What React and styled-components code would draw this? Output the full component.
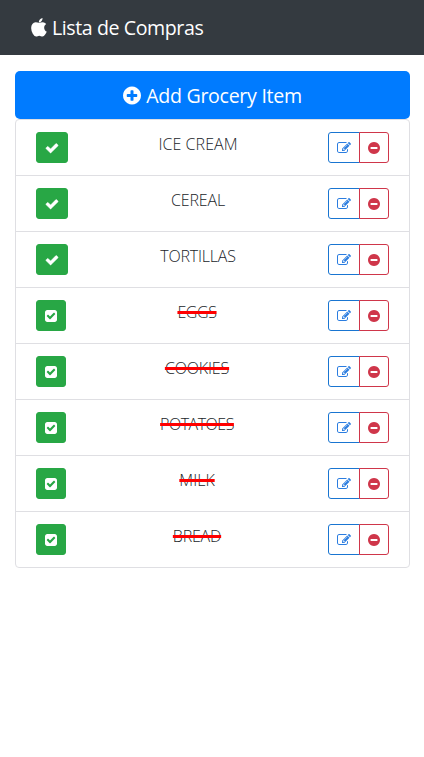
import React from "react";
import styled, { createGlobalStyle } from "styled-components";

const GlobalStyle = createGlobalStyle`
  *, *::before, *::after { box-sizing: border-box; }
  body {
    margin: 0;
    background: #fff;
    color: #212529;
    font-family: "Open Sans", "Noto Sans", sans-serif;
    font-size: 16px;
    line-height: 24px;
  }
`;

const disc =
  "m320-64q0 209-103 385.5t-279.5 279.5-385.5 103-385.5-103-279.5-279.5-103-385.5 103-385.5 279.5-279.5 385.5-103 385.5 103 279.5 279.5 103 385.5z";

const icons = {
  check: {
    box: "0 0 1792 1792",
    d: "M1671 566q0 40-28 68l-724 724-136 136q-28 28-68 28t-68-28l-136-136-362-362q-28-28-28-68t28-68l136-136q28-28 68-28t68 28l294 295 656-657q28-28 68-28t68 28l136 136q28 28 28 68z",
  },
  checkSquare: {
    box: "128 0 1536 1792",
    d: "M813 1299l614-614q19-19 19-45t-19-45l-102-102q-19-19-45-19t-45 19l-467 467-211-211q-19-19-45-19t-45 19l-102 102q-19 19-19 45t19 45l358 358q19 19 45 19t45-19zm851-883v960q0 119-84.5 203.5t-203.5 84.5h-960q-119 0-203.5-84.5t-84.5-203.5v-960q0-119 84.5-203.5t203.5-84.5h960q119 0 203.5 84.5t84.5 203.5z",
  },
  edit: {
    box: "0 0 1792 1792",
    d: "M888 1184l116-116-152-152-116 116v56h96v96h56zm440-720q-16-16-33 1l-350 350q-17 17-1 33t33-1l350-350q17-17 1-33zm80 594v190q0 119-84.5 203.5t-203.5 84.5h-832q-119 0-203.5-84.5t-84.5-203.5v-832q0-119 84.5-203.5t203.5-84.5h832q63 0 117 25 15 7 18 23 3 17-9 29l-49 49q-14 14-32 8-23-6-45-6h-832q-66 0-113 47t-47 113v832q0 66 47 113t113 47h832q66 0 113-47t47-113v-126q0-13 9-22l64-64q15-15 35-7t20 29zm-96-738l288 288-672 672h-288v-288zm444 132l-92 92-288-288 92-92q28-28 68-28t68 28l152 152q28 28 28 68t-28 68z",
  },
  plus: {
    box: "128 0 1536 1792",
    d: "M1344 960v-128q0-26-19-45t-45-19h-256v-256q0-26-19-45t-45-19h-128q-26 0-45 19t-19 45v256h-256q-26 0-45 19t-19 45v128q0 26 19 45t45 19h256v256q0 26 19 45t45 19h128q26 0 45-19t19-45v-256h256q26 0 45-19t19-45z" + disc,
  },
  minus: {
    box: "128 0 1536 1792",
    d: "M1344 960v-128q0-26-19-45t-45-19h-768q-26 0-45 19t-19 45v128q0 26 19 45t45 19h768q26 0 45-19t19-45z" + disc,
  },
  apple: {
    box: "195 0 1400 1792",
    d: "M1585 1215q-39 125-123 250-129 196-257 196-49 0-140-32-86-32-151-32-61 0-142 33-81 34-132 34-152 0-301-259-147-261-147-503 0-228 113-374 113-144 284-144 72 0 177 30 104 30 138 30 45 0 143-34 102-34 173-34 119 0 213 65 52 36 104 100-79 67-114 118-65 94-65 207 0 124 69 223t158 126zm-376-1173q0 61-29 136-30 75-93 138-54 54-108 72-37 11-104 17 3-149 78-257 74-107 250-148 1 3 2.500 11t2.500 11q0 4 .5 10t.5 10z",
  },
};

const Svg = styled.svg`
  display: block;
  flex: none;
  width: ${(p) => p.$width}px;
  height: ${(p) => p.$height}px;
  fill: currentColor;
  stroke: currentColor;
  stroke-width: ${(p) => p.$stroke || 0};
`;

function Icon({ name, width, height, stroke }) {
  return (
    <Svg viewBox={icons[name].box} $width={width} $height={height} $stroke={stroke} aria-hidden="true">
      <path d={icons[name].d} />
    </Svg>
  );
}

const Navbar = styled.nav`
  display: flex;
  align-items: center;
  height: 55px;
  padding: 0 31px;
  background: #343a40;
  color: #fff;
`;

const Brand = styled.a`
  display: flex;
  align-items: center;
  gap: 5px;
  font-size: 19.6px;
  line-height: 30px;
  letter-spacing: -0.42px;
  white-space: nowrap;
`;

const Main = styled.main`
  padding: 16px 14px 0 15px;
`;

const AddButton = styled.button`
  display: flex;
  align-items: center;
  justify-content: center;
  gap: 5px;
  width: 100%;
  height: 48px;
  padding: 0;
  border: 0;
  border-radius: 5px;
  background: #007bff;
  color: #fff;
  font: inherit;
  font-size: 19.6px;
  line-height: 30px;
  letter-spacing: -0.3px;
`;

const AddLabel = styled.span`
  padding-top: 2px;
`;

const List = styled.ul`
  margin: 0;
  padding: 0;
  list-style: none;
  border: 1px solid #dfdfe3;
  border-radius: 4px;
`;

const Item = styled.li`
  display: flex;
  align-items: flex-start;
  justify-content: space-between;
  height: 56px;
  padding: 12px 20px;

  & + & { border-top: 1px solid #dfdfe3; }
  &:first-child { height: 55px; }
`;

const Button = styled.button`
  display: flex;
  align-items: center;
  justify-content: center;
  height: 31px;
  padding: 0 8px;
  border: 1px solid currentColor;
  border-radius: 3px;
  background: transparent;
`;

const CheckButton = styled(Button)`
  width: ${(p) => (p.$done ? 30 : 32)}px;
  padding: 0;
  border-color: #28a745;
  background: #28a745;
  color: #fff;
`;

const EditButton = styled(Button)`
  border-color: #1975d1;
  border-radius: 3px 0 0 3px;
  color: #2b7de0;
`;

const RemoveButton = styled(Button)`
  margin-left: -1px;
  border-radius: 0 3px 3px 0;
  color: #cf364a;
`;

const Actions = styled.div`
  display: flex;
`;

const Name = styled.span`
  font-size: 16px;
  font-weight: 350;
  letter-spacing: ${(p) => p.$spacing}px;
  text-decoration: ${(p) => (p.$done ? "line-through 3px #f00" : "none")};
  text-decoration-skip-ink: none;
`;

const groceries = [
  { name: "ICE CREAM", spacing: 0.05 },
  { name: "CEREAL", spacing: -0.15 },
  { name: "TORTILLAS", spacing: -0.2 },
  { name: "EGGS", done: true, spacing: -0.4 },
  { name: "COOKIES", done: true, spacing: -0.15 },
  { name: "POTATOES", done: true, spacing: -0.5 },
  { name: "MILK", done: true, spacing: 0 },
  { name: "BREAD", done: true, spacing: -0.2 },
];

export default function App() {
  return (
    <>
      <GlobalStyle />
      <Navbar>
        <Brand>
          <Icon name="apple" width={16} height={20} />
          <span>Lista de Compras</span>
        </Brand>
      </Navbar>
      <Main>
        <AddButton>
          <Icon name="plus" width={18} height={21} />
          <AddLabel>Add Grocery Item</AddLabel>
        </AddButton>
        <List>
          {groceries.map(({ name, done, spacing }) => (
            <Item key={name}>
              <CheckButton $done={done} aria-label="Toggle">
                <Icon
                  name={done ? "checkSquare" : "check"}
                  width={done ? 12 : 14}
                  height={14}
                  stroke={done ? 0 : 60}
                />
              </CheckButton>
              <Name $done={done} $spacing={spacing}>{name}</Name>
              <Actions>
                <EditButton aria-label="Edit">
                  <Icon name="edit" width={14} height={14} />
                </EditButton>
                <RemoveButton aria-label="Remove">
                  <Icon name="minus" width={12} height={14} />
                </RemoveButton>
              </Actions>
            </Item>
          ))}
        </List>
      </Main>
    </>
  );
}
